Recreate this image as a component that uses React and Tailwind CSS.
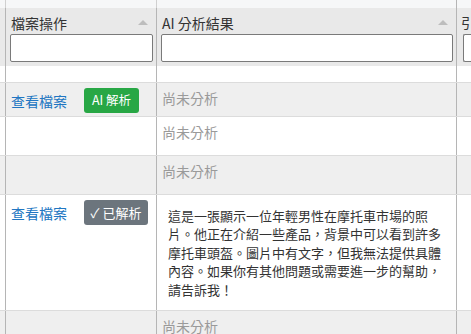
import React from "react";

const FONT = { fontFamily: '"Noto Sans CJK TC", "Noto Sans", sans-serif' };

function Tri() {
  return (
    <svg width="10" height="5" viewBox="0 0 10 5" className="shrink-0">
      <polygon points="0,5 5,0 10,5" fill="#bdbdbd" />
    </svg>
  );
}

function HeaderCell({ title, w, last }) {
  return (
    <div
      className={`flex flex-col shrink-0 ${last ? "" : "border-r border-[#b5b5b5]"}`}
      style={{ width: w }}
    >
      <div className="flex items-center justify-between pl-[5px] pr-[8px] h-[25px] pt-[4px]">
        <span className="text-[14px] leading-[20px] text-[#333] whitespace-nowrap">{title}</span>
        {!last && <Tri />}
      </div>
      <div className="pl-[4px] pr-[3px] pt-[1px]">
        <div className="h-[28px] bg-white border border-[#7a7a7a] rounded-[2px]" />
      </div>
    </div>
  );
}

function Row({ h, gray, col1, col2 }) {
  return (
    <div
      className={`flex border-b border-[#dcdcdc] ${gray ? "bg-[#efefef]" : "bg-white"}`}
      style={{ height: h }}
    >
      <div className="w-[6px] shrink-0 border-r border-[#b5b5b5]" />
      <div className="w-[151px] shrink-0 border-r border-[#b5b5b5] pl-[5px] pt-[5px]">{col1}</div>
      <div className="w-[300px] shrink-0 border-r border-[#b5b5b5] pl-[5px] pt-[2px]">{col2}</div>
      <div className="flex-1" />
    </div>
  );
}

function Actions({ done }) {
  return (
    <div className="flex items-center h-[25px]">
      <span className="text-[14px] leading-[20px] text-[#2176c2] w-[73px] whitespace-nowrap">查看檔案</span>
      {done ? (
        <span className="h-[25px] w-[64px] rounded-[3px] bg-[#6c757d] text-white text-[13px] flex items-center justify-center whitespace-nowrap">
          ✓ 已解析
        </span>
      ) : (
        <span className="h-[25px] w-[55px] rounded-[3px] bg-[#28a745] text-white text-[12.5px] flex items-center justify-center whitespace-nowrap">
          AI 解析
        </span>
      )}
    </div>
  );
}

const Pending = () => (
  <span className="text-[14px] leading-[20px] text-[#9a9a9a] whitespace-nowrap">尚未分析</span>
);

export default function App() {
  return (
    <div className="w-[471px] h-[334px] overflow-hidden bg-white" style={FONT}>
      <div className="h-[8px] bg-[#f6f7f8] flex">
        <div className="w-[6px] border-r border-[#d0d0d0]" />
        <div className="w-[151px] border-r border-[#d0d0d0]" />
        <div className="w-[300px] border-r border-[#b5b5b5]" />
      </div>
      <div className="flex h-[58px] bg-[#e9e9e9] overflow-hidden">
        <div className="w-[6px] shrink-0 border-r border-[#b5b5b5]" />
        <HeaderCell title="檔案操作" w={151} />
        <HeaderCell title="AI 分析結果" w={300} />
        <div className="flex-1 flex flex-col">
          <div className="pl-[4px] h-[25px] pt-[4px] text-[14px] leading-[20px] text-[#333]">引</div>
          <div className="pl-[6px] pt-[1px]">
            <div className="h-[28px] bg-white border border-[#7a7a7a] rounded-[2px] border-r-0" />
          </div>
        </div>
      </div>
      <Row h={17} gray={false} />
      <Row h={34} gray col1={<Actions />} col2={<Pending />} />
      <Row h={39} gray={false} col2={<Pending />} />
      <Row h={39} gray col2={<Pending />} />
      <Row
        h={116}
        gray={false}
        col1={<Actions done />}
        col2={
          <p className="w-[282px] pl-[6px] pt-[10px] text-[13px] leading-[18.4px] text-[#333]">
            這是一張顯示一位年輕男性在摩托車市場的照片。他正在介紹一些產品，背景中可以看到許多摩托車頭盔。圖片中有文字，但我無法提供具體內容。如果你有其他問題或需要進一步的幫助，請告訴我！
          </p>
        }
      />
      <Row h={30} gray col2={<Pending />} />
    </div>
  );
}
